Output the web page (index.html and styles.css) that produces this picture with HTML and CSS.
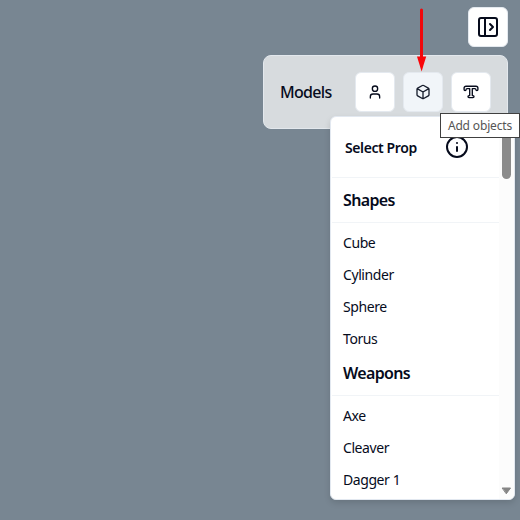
FILE: index.html
```html
<!DOCTYPE html>
<html lang="en">
<head>
<meta charset="utf-8">
<title>Models</title>
<link rel="stylesheet" href="styles.css">
</head>
<body>
<div class="app">
  <div class="topbar">
    <button class="btn" aria-label="Close panel">
      <svg width="24" height="24" viewBox="0 0 24 24"><rect x="3" y="3" width="18" height="18" rx="2"/><path d="M9 3v18M14 9l3 3-3 3"/></svg>
    </button>
  </div>
  <div class="panel">
    <span class="panel-title">Models</span>
    <div class="tools">
      <button class="btn" aria-label="Add characters">
        <svg width="16" height="16" viewBox="0 0 24 24"><circle cx="12" cy="7" r="4"/><path d="M19 21v-2a4 4 0 0 0-4-4H9a4 4 0 0 0-4 4v2"/></svg>
      </button>
      <button class="btn active" aria-label="Add objects">
        <svg width="16" height="16" viewBox="0 0 24 24"><path d="M21 8a2 2 0 0 0-1-1.73l-7-4a2 2 0 0 0-2 0l-7 4A2 2 0 0 0 3 8v8a2 2 0 0 0 1 1.73l7 4a2 2 0 0 0 2 0l7-4A2 2 0 0 0 21 16ZM3.3 7l8.7 5 8.7-5M12 22V12"/></svg>
      </button>
      <button class="btn" aria-label="Add text">
        <svg width="16" height="16" viewBox="0 0 16 16" class="thin"><path d="M3 2.200h10a1.900 1.900 0 0 1 1.900 1.900v1.500a1 1 0 0 1-2 0 1 1 0 0 0-1-1H9.300v7h.7a1 1 0 0 1 0 2H6a1 1 0 0 1 0-2h.7v-7H4.100a1 1 0 0 0-1 1 1 1 0 0 1-2 0V4.100A1.900 1.900 0 0 1 3 2.200Z"/></svg>
      </button>
    </div>
  </div>
  <div class="menu">
    <div class="menu-body">
      <div class="menu-head">
        <span>Select Prop</span>
        <svg width="24" height="24" viewBox="0 0 24 24"><circle cx="12" cy="12" r="10"/><path d="M12 16v-4M12 8h.01"/></svg>
      </div>
      <h2 class="first">Shapes</h2>
      <ul><li>Cube</li><li>Cylinder</li><li>Sphere</li><li>Torus</li></ul>
      <h2>Weapons</h2>
      <ul><li>Axe</li><li>Cleaver</li><li>Dagger 1</li></ul>
    </div>
    <div class="scroll">
      <div class="thumb"></div>
      <svg class="down" width="11" height="8" viewBox="0 0 11 8"><path d="M1.500 1h8L5.500 6.500Z"/></svg>
    </div>
  </div>
  <div class="tooltip">Add objects</div>
  <svg class="arrow" width="10" height="64" viewBox="0 0 10 64"><path class="shaft" d="M4.500 2v49"/><path class="tip" d="M0 48.500h9.200L4.600 63.500Z"/></svg>
</div>
</body>
</html>
```
FILE: styles.css
```css
* { box-sizing: border-box; }
body { margin: 0; }
.app {
  position: relative;
  width: 520px;
  height: 520px;
  overflow: hidden;
  padding: 7px 12px;
  background: #788692;
  color: #060b1c;
  font-family: "Noto Sans", "Open Sans", sans-serif;
}
svg { display: block; fill: none; stroke: #060b1c; stroke-width: 2; stroke-linecap: round; stroke-linejoin: round; }
.topbar { display: flex; justify-content: flex-end; }
.btn {
  display: flex;
  align-items: center;
  justify-content: center;
  width: 40px;
  height: 40px;
  padding: 0;
  border: 1px solid #e4e9ef;
  border-radius: 6px;
  background: #fff;
}
.active { background: #f1f5f9; }
.active svg { stroke: #171d2d; }
.btn .thin { stroke-width: 1.35; }
.panel {
  display: flex;
  align-items: center;
  justify-content: space-between;
  width: 245px;
  height: 74px;
  margin: 8px 0 0 auto;
  padding: 0 16px;
  border: 1px solid #e3e8ed;
  border-radius: 8px;
  background: #d7dbde;
}
.panel-title { font-size: 16px; font-weight: 500; letter-spacing: -0.7px; }
.tools { display: flex; gap: 8px; }
.menu {
  position: absolute;
  left: 330px;
  top: 116px;
  display: flex;
  width: 185px;
  height: 384px;
  overflow: hidden;
  border: 1px solid #e2e8f0;
  border-radius: 6px;
  background: #fff;
  box-shadow: 0 3px 6px rgba(0, 0, 0, .13);
}
.menu-body { width: 168px; padding-left: 1px; }
.menu-head {
  display: flex;
  align-items: center;
  justify-content: space-between;
  height: 61px;
  padding: 0 30px 0 13px;
  border-bottom: 1px solid #f1f4f7;
  font-size: 14px;
  font-weight: 600;
  letter-spacing: -0.4px;
}
h2 {
  height: 41px;
  margin: 0;
  padding-left: 11px;
  border-bottom: 1px solid #f1f4f7;
  font-size: 16px;
  font-weight: 600;
  line-height: 36px;
  letter-spacing: -0.65px;
}
.first { height: 45px; line-height: 45px; }
ul { margin: 0; padding: 4px 0 0 11px; list-style: none; }
li { height: 32px; font-size: 14px; line-height: 32px; letter-spacing: -0.42px; }
.scroll {
  display: flex;
  flex: 1;
  flex-direction: column;
  align-items: center;
  justify-content: space-between;
  padding: 0 1px 4px 0;
  background: #fcfcfc;
}
.thumb { width: 9px; height: 62px; border-radius: 0 0 5px 5px; background: #8b8b8b; }
.down { fill: #858585; stroke: #858585; stroke-width: 1; }
.tooltip {
  position: absolute;
  left: 440px;
  top: 113px;
  width: 80px;
  height: 25px;
  border: 1px solid #404040;
  background: #fff;
  color: #555;
  font-size: 12px;
  line-height: 23px;
  letter-spacing: -0.15px;
  text-align: center;
  white-space: nowrap;
}
.arrow { position: absolute; left: 417px; top: 8px; }
.shaft { stroke: #f0070b; stroke-width: 3; }
.tip { fill: #f90408; stroke: none; }
```
